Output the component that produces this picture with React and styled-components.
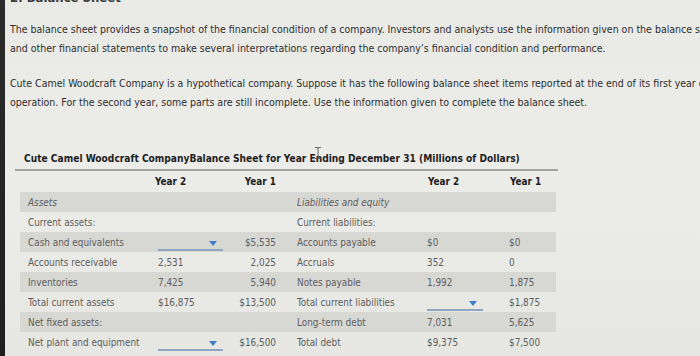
import React from "react";
import styled, { createGlobalStyle } from "styled-components";

const Global = createGlobalStyle`
  html, body { margin: 0; padding: 0; }
  body {
    width: 700px; height: 356px; overflow: hidden;
    background: #ebebe8;
    font-family: "DejaVu Sans Condensed", "DejaVu Sans", Verdana, sans-serif;
  }
`;

const Page = styled.div`
  display: flex;
  height: 356px;
  background: linear-gradient(180deg, #e9e9e6 0%, #ecece9 50%, #e6e6e3 100%);
`;

const Edge = styled.div`
  flex: 0 0 5px;
  background: linear-gradient(180deg, #2b2b2b 0%, #1f1f1f 100%);
`;

const Content = styled.div`
  flex: 1;
  padding-left: 5px;
  position: relative;
  min-width: 0;
`;

const Heading = styled.h2`
  margin: -10px 0 0 0;
  font-size: 13px;
  line-height: 16px;
  font-weight: bold;
  color: #3a3a3a;
  white-space: nowrap;
`;

const Para = styled.p`
  margin: ${(p) => p.$top}px 0 0 0;
  font-size: 10.5px;
  line-height: 19px;
  color: #2e2e2e;
  white-space: nowrap;
`;

const TableWrap = styled.div`
  margin: 40px 0 0 5px;
  width: 543px;
`;

const Caption = styled.div`
  font-size: 10.15px;
  font-weight: bold;
  color: #1e1e1e;
  padding: 0 0 4px 9px;
  line-height: 13px;
  border-bottom: 2px solid #a3a3a0;
  white-space: nowrap;
`;

const Grid = styled.div`
  display: grid;
  grid-template-columns: 130px 85px 50px 135px 80px 56px;
  margin-left: 5px;
`;

const Row = styled.div`
  display: contents;
`;

const Cell = styled.div`
  height: ${(p) => (p.$header ? 21 : 20)}px;
  display: flex;
  align-items: center;
  justify-content: ${(p) => (p.$right ? "flex-end" : "flex-start")};
  padding: ${(p) => p.$pad || "0"};
  font-size: 9.9px;
  color: ${(p) => (p.$header ? "#1e1e1e" : "#5e5e5c")};
  font-weight: ${(p) => (p.$header ? "bold" : "normal")};
  font-style: ${(p) => (p.$italic ? "italic" : "normal")};
  background: ${(p) => (p.$shade ? "#d7d7d4" : "transparent")};
  white-space: nowrap;
`;

const Dropdown = styled.div`
  width: ${(p) => p.$w}px;
  height: 13px;
  border-bottom: 2px solid #8ea6c2;
  display: flex;
  justify-content: flex-end;
  align-items: center;
  padding-right: 6px;
  box-sizing: border-box;
  margin-top: 4px;
`;

const Caret = styled.div`
  width: 0; height: 0;
  border-left: 4px solid transparent;
  border-right: 4px solid transparent;
  border-top: 5px solid #3d7fc6;
`;

const Cursor = styled.svg`
  position: absolute;
  left: 309px;
  top: 147px;
`;

const rows = [
  { shade: true, l: "Assets", li: true, a: "", b: "", r: "Liabilities and equity", ri: true, c: "", d: "" },
  { l: "Current assets:", r: "Current liabilities:" },
  { shade: true, l: "Cash and equivalents", a: "dd", b: "$5,535", r: "Accounts payable", c: "$0", d: "$0" },
  { l: "Accounts receivable", a: "2,531", b: "2,025", r: "Accruals", c: "352", d: "0" },
  { shade: true, l: "Inventories", a: "7,425", b: "5,940", r: "Notes payable", c: "1,992", d: "1,875" },
  { l: "Total current assets", a: "$16,875", b: "$13,500", r: "Total current liabilities", c: "dd", d: "$1,875" },
  { shade: true, l: "Net fixed assets:", r: "Long-term debt", c: "7,031", d: "5,625" },
  { l: "Net plant and equipment", a: "dd", b: "$16,500", r: "Total debt", c: "$9,375", d: "$7,500" },
];

const Value = ({ v, w, shade, pad }) => (
  <Cell $shade={shade} $pad={pad}>
    {v === "dd" ? (
      <Dropdown $w={w}>
        <Caret />
      </Dropdown>
    ) : (
      v
    )}
  </Cell>
);

export default function App() {
  return (
    <>
      <Global />
      <Page>
        <Edge />
        <Content>
          <Heading>2. Balance Sheet</Heading>
          <Para $top={14}>
            The balance sheet provides a snapshot of the financial condition of a company. Investors and analysts use the information given on the balance sheet
            <br />
            and other financial statements to make several interpretations regarding the company’s financial condition and performance.
          </Para>
          <Para $top={16}>
            Cute Camel Woodcraft Company is a hypothetical company. Suppose it has the following balance sheet items reported at the end of its first year of
            <br />
            operation. For the second year, some parts are still incomplete. Use the information given to complete the balance sheet.
          </Para>
          <TableWrap>
            <Caption>
              Cute Camel Woodcraft CompanyBalance Sheet for Year Ending December 31 (Millions of Dollars)
            </Caption>
            <Grid>
              <Row>
                <Cell $header />
                <Cell $header $pad="0 0 0 5px">Year 2</Cell>
                <Cell $header $right $pad="0 9px 0 0">Year 1</Cell>
                <Cell $header />
                <Cell $header $pad="0 0 0 8px">Year 2</Cell>
                <Cell $header $pad="0 0 0 10px">Year 1</Cell>
              </Row>
              {rows.map((r, i) => (
                <Row key={i}>
                  <Cell $shade={r.shade} $italic={r.li} $pad="0 0 0 8px">{r.l}</Cell>
                  <Value v={r.a} w={65} shade={r.shade} pad="0 0 0 8px" />
                  <Cell $shade={r.shade} $right $pad="0 9px 0 0">{r.b}</Cell>
                  <Cell $shade={r.shade} $italic={r.ri} $pad="0 0 0 12px">{r.r}</Cell>
                  <Value v={r.c} w={56} shade={r.shade} pad="0 0 0 7px" />
                  <Cell $shade={r.shade} $pad="0 0 0 9px">{r.d}</Cell>
                </Row>
              ))}
            </Grid>
          </TableWrap>
          <Cursor width="8" height="12" viewBox="0 0 8 12">
            <path d="M1 0.5 H3 Q4 0.5 4 1.5 V10.5 Q4 11.5 3 11.5 H1 M7 0.5 H5 Q4 0.5 4 1.5 M4 10.5 Q4 11.5 5 11.5 H7" fill="none" stroke="#555" strokeWidth="0.9" />
          </Cursor>
        </Content>
      </Page>
    </>
  );
}
